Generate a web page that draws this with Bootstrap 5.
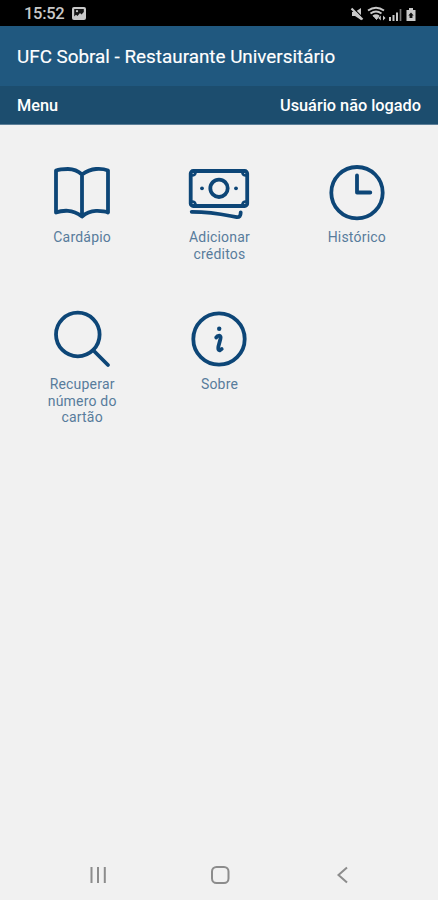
<!DOCTYPE html>
<html lang="pt-BR">
<head>
<meta charset="utf-8">
<meta name="viewport" content="width=device-width, initial-scale=1">
<title>UFC Sobral - Restaurante Universitário</title>
<link href="https://cdn.jsdelivr.net/npm/bootstrap@5.3.0/dist/css/bootstrap.min.css" rel="stylesheet">
<style>
body { font-family: Roboto, "Noto Sans", sans-serif; background: #f1f1f1; }
.status-bar { height: 26px; background: #000; color: #c9c9c9; padding: 1px 20px 0 24px; }
.clock-text { font-size: 16.5px; line-height: 24px; letter-spacing: -.3px; font-weight: 500; }
.title-bar { height: 60px; background: #20587f; padding: 2px 17px 0; }
.title-text { font-size: 18.85px; line-height: 24px; font-weight: 400; -webkit-text-stroke: .15px #fff; }
.menu-bar { height: 39px; background: #1c4d6e; padding: 2px 17px 0; font-size: 16.3px; font-weight: 500; border-bottom: 1px solid #5d7f98; }
.tiles { padding: 35px 12.5px 0 13.5px; }
.tile { height: 147px; color: #587c9c; font-size: 14px; line-height: 16.5px; letter-spacing: .2px; text-decoration: none; }
.tile svg { width: 64px; height: 64px; margin-bottom: 5px; fill: none; stroke: #0d4677; stroke-width: 3.8; stroke-linecap: round; stroke-linejoin: round; }
.tile-label { max-width: 90px; }
.nav-keys { height: 51px; padding: 0 84px 0 86px; }
.nav-keys svg { display: block; fill: none; stroke: #8c8c8c; stroke-width: 2; }
</style>
</head>
<body class="d-flex flex-column vh-100 overflow-hidden">
<header class="text-white">
  <div class="status-bar d-flex align-items-center justify-content-between">
    <div class="d-flex align-items-center">
      <span class="clock-text">15:52</span>
      <svg class="ms-2" width="14" height="13" viewBox="0 0 14 13"><rect x="0" y="0" width="14" height="13" rx="2" fill="#c9c9c9"/><path d="M2.200 2h9.600v3L9.500 7.500 8 6 5.500 9 4 7.700 2.200 9.500z" fill="#151515"/><circle cx="5" cy="4.200" r="1.100" fill="#c9c9c9"/></svg>
    </div>
    <svg width="68" height="16" viewBox="350 5 68 16" fill="none" stroke="#c9c9c9">
      <path d="M352 11h3l6-4v12l-6-4h-3z" fill="#c9c9c9" stroke="none"/>
      <path d="M352.500 6.500l11 11" stroke="#000" stroke-width="1.300"/><path d="M351.500 7.500l11 11" stroke-width="2.200"/>
      <path d="M368 9.500q8-5.500 16 0M370.500 12.500q5.500-4 11 0M373 15.200q3-2 6 0" stroke-width="1.900"/>
      <path d="M374 15.500l2.500 3 2.300-3z" fill="#c9c9c9"/>
      <path d="M378.300 17l2.500-2.500v5zM385.500 17l-2.500-2.500v5z" fill="#c9c9c9" stroke="none"/>
      <path d="M390 16v4M393.500 14v6M397 11.500v8.500" stroke-width="2"/><path d="M400.500 8v12" stroke="#777" stroke-width="1.700"/>
      <path d="M406.500 9h2.500V7h4v2h2.500v11h-9z" fill="#c9c9c9" stroke="none"/>
      <path d="M408.300 14.500l2.700-2.900 2.700 2.900h-1.300v2.500h-2.800v-2.500z" fill="#111" stroke="none"/>
    </svg>
  </div>
  <div class="title-bar d-flex align-items-center"><h1 class="title-text mb-0 text-nowrap">UFC Sobral - Restaurante Universitário</h1></div>
  <div class="menu-bar d-flex align-items-center justify-content-between"><span>Menu</span><span>Usuário não logado</span></div>
</header>
<main class="tiles flex-grow-1">
  <div class="row g-0 text-center">
    <a class="tile col-4 d-flex flex-column align-items-center" href="#">
      <svg viewBox="50 160 64 64"><path d="M82 174.500Q76 169 68 169T56 170.500V212.500Q61 210.500 68 210.800T82 216.500Q88 211 96 210.800T108 212.500V170.500Q103 168.500 96 169T82 174.500V215"/></svg>
      <span class="tile-label">Cardápio</span>
    </a>
    <a class="tile col-4 d-flex flex-column align-items-center" href="#">
      <svg viewBox="187.300 160 64 64"><rect x="191" y="171" width="56.500" height="35" rx="2.500"/><circle cx="219.300" cy="188.300" r="8.700"/><path d="M192 175.500q4 0 4-4M246.500 175.500q-4 0-4-4M192 201.500q4 0 4 4M246.500 201.500q-4 0-4 4" stroke-width="2.500"/><circle cx="202.300" cy="188.300" r="1.900" fill="#0d4677" stroke="none"/><circle cx="236.300" cy="188.300" r="1.900" fill="#0d4677" stroke="none"/><path d="M192 211.800Q211 211.800 231 216L237 217.200Q241 217.500 241 212.500"/></svg>
      <span class="tile-label">Adicionar créditos</span>
    </a>
    <a class="tile col-4 d-flex flex-column align-items-center" href="#">
      <svg viewBox="324.700 160 64 64"><circle cx="356.700" cy="192.700" r="25.700"/><path d="M356.700 175.500V192.500H370"/></svg>
      <span class="tile-label">Histórico</span>
    </a>
    <a class="tile col-4 d-flex flex-column align-items-center" href="#">
      <svg viewBox="50 307 64 64"><circle cx="77.800" cy="334.500" r="21.800"/><path d="M93.500 350.500L108 365"/></svg>
      <span class="tile-label">Recuperar número do cartão</span>
    </a>
    <a class="tile col-4 d-flex flex-column align-items-center" href="#">
      <svg viewBox="187.300 307 64 64"><circle cx="219.300" cy="339" r="25.700"/><circle cx="219.500" cy="328.700" r="2.200" fill="#0d4677" stroke="none"/><path d="M216.500 337.500Q217.500 335.700 219.500 335.700Q221.500 336 220.700 339L218.700 346.500Q218 350.500 220 350.300L222 349" stroke-width="3.800"/></svg>
      <span class="tile-label">Sobre</span>
    </a>
  </div>
</main>
<nav class="nav-keys d-flex align-items-center justify-content-between">
  <svg width="24" height="24" viewBox="0 0 24 24"><path d="M5.500 4v16M12 4v16M18.800 4v16"/></svg>
  <svg width="24" height="24" viewBox="0 0 24 24"><rect x="4" y="4" width="16.500" height="16" rx="4.500"/></svg>
  <svg width="24" height="24" viewBox="0 0 24 24"><path d="M17 4.500L8.500 12l8.500 7.500"/></svg>
</nav>
<script src="https://cdn.jsdelivr.net/npm/bootstrap@5.3.0/dist/js/bootstrap.bundle.min.js"></script>
</body>
</html>
